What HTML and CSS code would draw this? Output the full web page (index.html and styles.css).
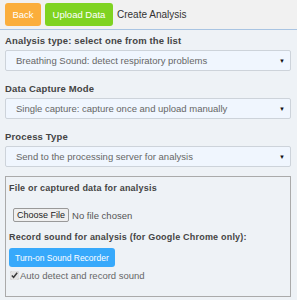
FILE: index.html
```html
<!DOCTYPE html>
<html lang="en">
<head>
  <meta charset="UTF-8">
  <meta name="viewport" content="width=device-width, initial-scale=1.0">
  <title>Create Analysis</title>
  <link rel="stylesheet" href="styles.css">
</head>
<body>
  <div class="topbar">
    <button class="btn btn_back">Back</button>
    <button class="btn btn_upload">Upload Data</button>
    <span class="title">Create Analysis</span>
  </div>
  <div class="content">
    <p class="label">Analysis type: select one from the list</p>
    <div class="select">
      <span>Breathing Sound: detect respiratory problems</span>
      <span class="arrow">&#9660;</span>
    </div>

    <p class="label">Data Capture Mode</p>
    <div class="select">
      <span>Single capture: capture once and upload manually</span>
      <span class="arrow">&#9660;</span>
    </div>

    <p class="label">Process Type</p>
    <div class="select">
      <span>Send to the processing server for analysis</span>
      <span class="arrow">&#9660;</span>
    </div>

    <div class="box">
      <p class="label first">File or captured data for analysis</p>
      <div class="file_row">
        <span class="file_btn">Choose File</span>
        <span class="file_name">No file chosen</span>
      </div>
      <p class="label">Record sound for analysis (for Google Chrome only):</p>
      <button class="btn btn_rec">Turn-on Sound Recorder</button>
      <label class="check">
        <input type="checkbox" checked>
        Auto detect and record sound
      </label>
    </div>
  </div>
</body>
</html>
```

FILE: styles.css
```css
body {
  margin: 0;
  background: #eef2f6;
  font-family: "Liberation Sans", Arial, sans-serif;
  font-size: 9.5px;
  color: #333;
}

.topbar {
  display: flex;
  align-items: center;
  gap: 4px;
  height: 29px;
  padding: 0 5px;
  background: #f1f1f1;
  border-bottom: 1px solid #a9c4e2;
}

.btn {
  border: none;
  border-radius: 3px;
  color: white;
  font-family: "Liberation Sans", Arial, sans-serif;
  font-size: 9.5px;
  cursor: pointer;
}

.btn_back {
  height: 23px;
  width: 36px;
  padding: 0;
  background: #fbae3c;
}

.btn_upload {
  height: 23px;
  width: 68px;
  padding: 0;
  background: #7fd321;
}

.title {
  font-size: 10px;
  color: #333;
}

.content {
  padding: 4px 6px 0 5px;
}

.label {
  margin: 11px 0 3px 0;
  font-weight: bold;
  font-size: 9.5px;
  line-height: 13px;
  letter-spacing: 0.15px;
  color: #444;
}

.content > .label:first-child {
  margin-top: 0;
}

.select {
  display: flex;
  justify-content: space-between;
  align-items: center;
  height: 19px;
  padding: 0 5px 0 10px;
  background: #f0f6fe;
  border: 1px solid #cdd3da;
  border-radius: 2px;
  color: #666;
}

.arrow {
  font-size: 6px;
  color: #111;
}

.box {
  margin-top: 9px;
  height: 112px;
  padding: 5px 6px 2px 3px;
  border: 1px solid #aaa;
}

.box .first {
  margin-top: 0;
}

.box .label {
  font-size: 9px;
  letter-spacing: 0.2px;
}

.file_row {
  display: flex;
  align-items: center;
  gap: 3px;
  margin: 13px 0 0 4px;
}

.file_btn {
  padding: 1px 3px;
  background: #efefef;
  border: 1px solid #999;
  border-radius: 2px;
  font-size: 9px;
  color: #222;
}

.file_name {
  font-size: 9.5px;
  color: #555;
}

.box .label:nth-of-type(2) {
  margin-top: 9px;
}

.btn_rec {
  display: block;
  height: 19px;
  padding: 0 6px;
  margin-top: 4px;
  font-size: 8.5px;
  background: #37a9fb;
}

.check {
  display: flex;
  align-items: center;
  gap: 1px;
  margin-top: 3px;
  font-size: 9.5px;
  color: #666;
}

.check input {
  width: 9px;
  height: 9px;
  margin: 0 0 0 1px;
  accent-color: #e4e4e4;
}
```
